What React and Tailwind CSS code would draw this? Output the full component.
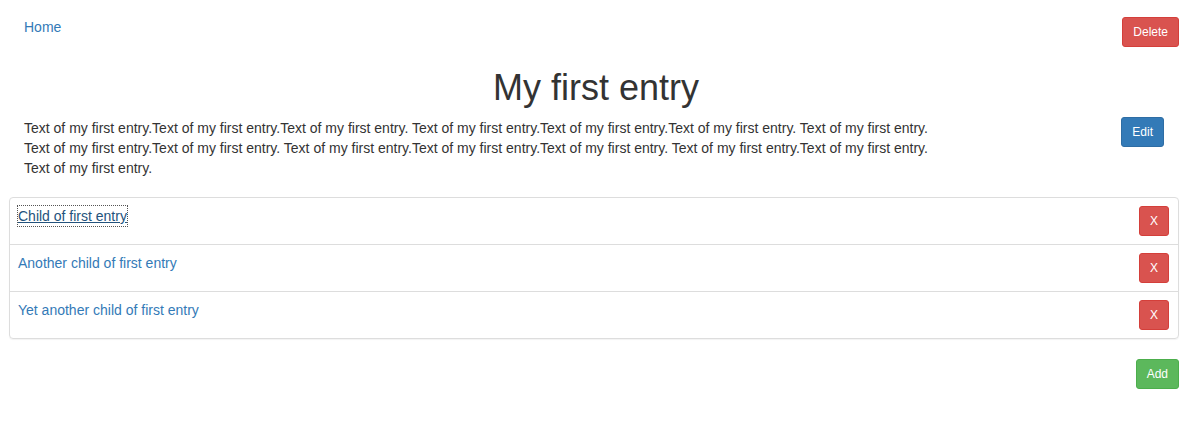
import React from "react";

const t = "Text of my first entry.";
const body = [t + t + t, t + t + t, t, t + t, t + t + t, t + t, t].join(" ");

const children = [
    "Child of first entry",
    "Another child of first entry",
    "Yet another child of first entry",
];

function SmallButton({ color, children }) {
    const styles = {
        danger: "bg-[#d9534f] border-[#d43f3a]",
        primary: "bg-[#337ab7] border-[#2e6da4]",
        success: "bg-[#5cb85c] border-[#4cae4c]",
    };
    return (
        <button
            className={`h-[30px] px-[10px] text-[12px] leading-[18px] text-white border rounded-[3px] shrink-0 ${styles[color]}`}
        >
            {children}
        </button>
    );
}

export default function App() {
    return (
        <div className="bg-white w-[1196px] min-h-[430px] text-[14px] leading-[20px] text-[#333] font-['Liberation_Sans',Arial,sans-serif]">
            <div className="flex items-start justify-between pl-[24px] pr-[17px] pt-[17px]">
                <a href="#" className="text-[#337ab7]">
                    Home
                </a>
                <SmallButton color="danger">Delete</SmallButton>
            </div>

            <h1 className="mt-[21px] text-center text-[36px] leading-[40px] font-normal text-[#333] pr-[4px]">
                My first entry
            </h1>

            <div className="flex items-start justify-between pl-[24px] pr-[32px] mt-[9px]">
                <p className="w-[906px] mt-[1px]">{body}</p>
                <SmallButton color="primary">Edit</SmallButton>
            </div>

            <div className="ml-[9px] mt-[19px] w-[1170px] border border-[#ddd] rounded-[4px] shadow-[0_1px_1px_rgba(0,0,0,0.05)]">
                {children.map((label, idx) => (
                    <div
                        key={idx}
                        className={`flex items-start justify-between pl-[8px] pr-[9px] py-[8px] ${
                            idx < children.length - 1 ? "border-b border-[#ddd]" : ""
                        }`}
                    >
                        <a
                            href="#"
                            className={
                                idx === 0
                                    ? "text-[#23527c] underline outline-1 outline-dotted outline-[#555]"
                                    : "text-[#337ab7]"
                            }
                        >
                            {label}
                        </a>
                        <SmallButton color="danger">X</SmallButton>
                    </div>
                ))}
            </div>

            <div className="flex justify-end pr-[17px] mt-[20px]">
                <SmallButton color="success">Add</SmallButton>
            </div>
        </div>
    );
}
